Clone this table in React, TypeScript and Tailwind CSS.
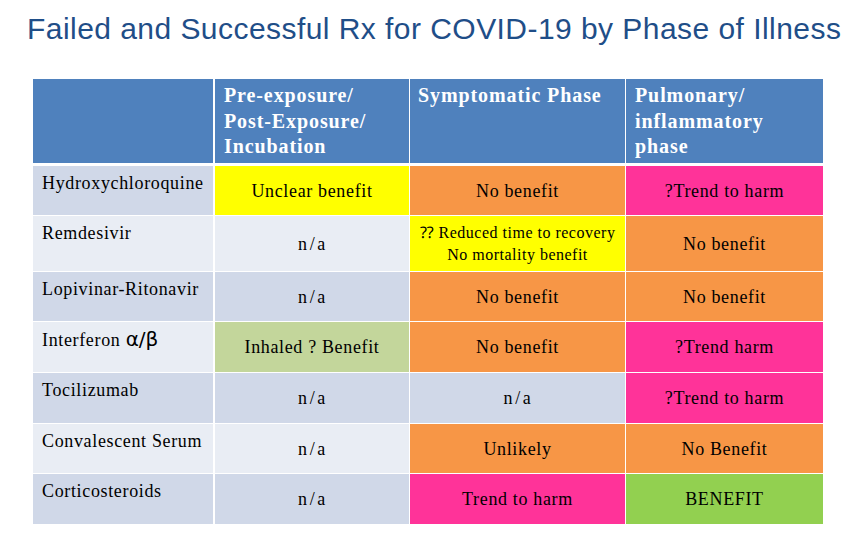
const serif = "font-['Liberation_Serif','Times_New_Roman',serif]";

type Cell = { text: React.ReactNode; bg: string; small?: boolean };

const na = (
  <>
    n<span className="mx-[2px]">/</span>a
  </>
);

const rows: { name: React.ReactNode; rowBg: string; h: string; cells: Cell[] }[] = [
  {
    name: "Hydroxychloroquine",
    rowBg: "bg-[#d0d8e8]",
    h: "h-[49px]",
    cells: [
      { text: "Unclear benefit", bg: "bg-[#ffff00]" },
      { text: "No benefit", bg: "bg-[#f79646]" },
      { text: "?Trend to harm", bg: "bg-[#ff3399]" },
    ],
  },
  {
    name: "Remdesivir",
    rowBg: "bg-[#e9edf4]",
    h: "h-[55px]",
    cells: [
      { text: na, bg: "bg-[#e9edf4]" },
      {
        text: (
          <>
            ⁇ Reduced time to recovery
            <br />
            No mortality benefit
          </>
        ),
        bg: "bg-[#ffff00]",
        small: true,
      },
      { text: "No benefit", bg: "bg-[#f79646]" },
    ],
  },
  {
    name: "Lopivinar-Ritonavir",
    rowBg: "bg-[#d0d8e8]",
    h: "h-[49px]",
    cells: [
      { text: na, bg: "bg-[#d0d8e8]" },
      { text: "No benefit", bg: "bg-[#f79646]" },
      { text: "No benefit", bg: "bg-[#f79646]" },
    ],
  },
  {
    name: (
      <>
        Interferon{" "}
        <span className="font-['DejaVu_Sans',sans-serif] text-[20px] tracking-normal">α/β</span>
      </>
    ),
    rowBg: "bg-[#e9edf4]",
    h: "h-[50px]",
    cells: [
      { text: "Inhaled ? Benefit", bg: "bg-[#c3d69b]" },
      { text: "No benefit", bg: "bg-[#f79646]" },
      { text: "?Trend harm", bg: "bg-[#ff3399]" },
    ],
  },
  {
    name: "Tocilizumab",
    rowBg: "bg-[#d0d8e8]",
    h: "h-[50px]",
    cells: [
      { text: na, bg: "bg-[#d0d8e8]" },
      { text: na, bg: "bg-[#d0d8e8]" },
      { text: "?Trend to harm", bg: "bg-[#ff3399]" },
    ],
  },
  {
    name: "Convalescent Serum",
    rowBg: "bg-[#e9edf4]",
    h: "h-[49px]",
    cells: [
      { text: na, bg: "bg-[#e9edf4]" },
      { text: "Unlikely", bg: "bg-[#f79646]" },
      { text: "No Benefit", bg: "bg-[#f79646]" },
    ],
  },
  {
    name: "Corticosteroids",
    rowBg: "bg-[#d0d8e8]",
    h: "h-[50px]",
    cells: [
      { text: na, bg: "bg-[#d0d8e8]" },
      { text: "Trend to harm", bg: "bg-[#ff3399]" },
      { text: "BENEFIT", bg: "bg-[#92d050]" },
    ],
  },
];

// column widths after the drug name column, plus the white rule before each
const cols = [
  { w: "w-[194px]", ml: "ml-[2px]", pl: "pl-[9px]" },
  { w: "w-[215px]", ml: "ml-[1px]", pl: "pl-[8px]" },
  { w: "w-[197px]", ml: "ml-[1px]", pl: "pl-[9px]" },
];

export default function App() {
  return (
    <div className="h-[547px] w-[856px] bg-white">
      <h1 className="pl-[27px] pt-[11px] font-['Liberation_Sans',Arial,sans-serif] text-[30px] leading-[36px] tracking-[0.45px] text-[#1f4e88]">
        Failed and Successful Rx for COVID-19 by Phase of Illness
      </h1>

      <div className={`ml-[33px] mt-[32px] w-[790px] bg-white text-black ${serif}`}>
        <div className="flex h-[84px]">
          <div className="w-[180px] bg-[#4f81bd]" />
          {[
            ["Pre-exposure/", "Post-Exposure/", "Incubation"],
            ["Symptomatic Phase"],
            ["Pulmonary/", "inflammatory", "phase"],
          ].map((lines, i) => (
            <div
              key={i}
              className={`${cols[i].w} ${cols[i].ml} ${cols[i].pl} bg-[#4f81bd] pt-[4px] text-[20px] font-bold leading-[25.7px] tracking-[0.9px] text-white`}
            >
              {lines.map((l) => (
                <div key={l}>{l}</div>
              ))}
            </div>
          ))}
        </div>

        <div className="mt-[3px] flex flex-col gap-[1px]">
          {rows.map((row, r) => (
            <div key={r} className={`flex ${row.h}`}>
              <div className={`w-[180px] ${row.rowBg} pl-[9px] pt-[6px] text-[18px] leading-[22px] tracking-[0.65px]`}>
                {row.name}
              </div>
              {row.cells.map((c, i) => (
                <div
                  key={i}
                  className={`${cols[i].w} ${cols[i].ml} ${c.bg} flex items-center justify-center text-center ${
                    c.small
                      ? "text-[16px] leading-[21.7px] tracking-[0.5px]"
                      : "text-[18px] leading-[22px] tracking-[0.65px]"
                  }`}
                >
                  <span>{c.text}</span>
                </div>
              ))}
            </div>
          ))}
        </div>
      </div>
    </div>
  );
}
